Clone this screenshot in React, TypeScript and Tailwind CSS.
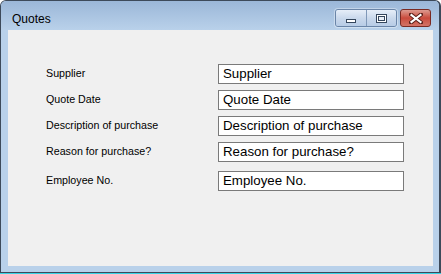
import React from "react";

const fields = [
  { label: "Supplier", value: "Supplier", mt: "mt-0" },
  { label: "Quote Date", value: "Quote Date", mt: "mt-[6px]" },
  { label: "Description of purchase", value: "Description of purchase", mt: "mt-[6px]" },
  { label: "Reason for purchase?", value: "Reason for purchase?", mt: "mt-[6px]" },
  { label: "Employee No.", value: "Employee No.", mt: "mt-[9px]" },
];

export default function App() {
  return (
    <div className="w-[441px] h-[274px] bg-white flex flex-col" style={{ fontFamily: '"Liberation Sans", Arial, sans-serif' }}>
      <div className="w-[441px] h-[273px] rounded-t-[6px] border border-[#3d4a5a] border-r-2 bg-[#b9d1ea] flex flex-col overflow-hidden">
        {/* title bar */}
        <div className="h-[29px] flex items-start pt-[8px] pr-[8px] pl-[11px] bg-gradient-to-b from-[#9bb7d8] to-[#b9d1ea]">
          <div className="text-[12px] leading-[18px] text-black mt-[1px]">Quotes</div>
          <div className="ml-auto flex items-start">
            <div className="flex rounded-[3px] border border-[#6a85a8] overflow-hidden shadow-[0_0_0_1px_rgba(255,255,255,0.35)]">
              <div className="w-[31px] h-[16px] flex items-center justify-center bg-gradient-to-b from-[#e6eef8] via-[#cad9ec] to-[#b7cce6] border-r border-[#7f98b8]">
                <div className="w-[10px] h-[4px] mt-[5px] bg-white border border-[#34465c]" />
              </div>
              <div className="w-[29px] h-[16px] flex items-center justify-center bg-gradient-to-b from-[#e6eef8] via-[#cad9ec] to-[#b7cce6]">
                <svg width="11" height="9" viewBox="0 0 11 9">
                  <rect x="0.5" y="0.5" width="10" height="8" fill="#ffffff" stroke="#34465c" />
                  <rect x="2.5" y="2.5" width="6" height="4" fill="#e8eef6" stroke="#34465c" />
                </svg>
              </div>
            </div>
            <div className="ml-[3px] w-[31px] h-[18px] rounded-[3px] border border-[#7a2a22] flex items-center justify-center bg-gradient-to-b from-[#dc9a90] via-[#c94a3c] to-[#d27366]">
              <svg width="14" height="11" viewBox="0 0 14 11">
                <path d="M2 1.5 L12 9.5 M12 1.5 L2 9.5" stroke="#5a1f18" strokeWidth="4" strokeLinecap="square" />
                <path d="M2.5 2 L11.5 9 M11.5 2 L2.5 9" stroke="#ffffff" strokeWidth="2.2" strokeLinecap="square" />
              </svg>
            </div>
          </div>
        </div>
        {/* client */}
        <div className="pl-[7px] pr-[6px] pb-[6px]">
          <div className="h-[236px] bg-[#f0f0f0] pt-[34px] pl-[38px] flex flex-col">
            {fields.map((f) => (
              <div key={f.label} className={`flex items-center ${f.mt}`}>
                <div className="w-[172px] text-[10.7px] leading-[14px] text-black pb-[2px]">{f.label}</div>
                <div className="w-[186px] h-[20px] bg-white border border-[#7a7a7a] flex items-center pl-[4px] text-[13.3px] text-black">
                  {f.value}
                </div>
              </div>
            ))}
          </div>
        </div>
      </div>
      <div className="h-[1px] bg-[#38d4e4]" />
    </div>
  );
}
